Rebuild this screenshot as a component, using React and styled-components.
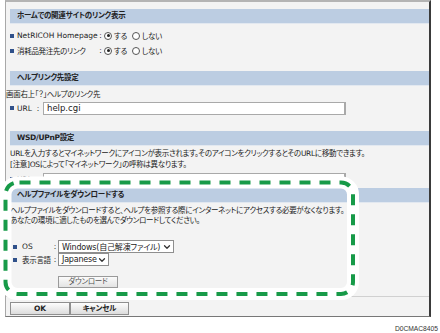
import React from "react";
import styled, { createGlobalStyle } from "styled-components";
import { ChevronDown } from "lucide-react";

const GlobalStyle = createGlobalStyle`
  html, body {
    margin: 0;
    padding: 0;
    background: #fff;
  }
  body {
    font-family: "DejaVu Sans", "Noto Sans CJK JP", sans-serif;
    font-size: 7.5px;
    color: #222;
    font-feature-settings: "palt";
  }
`;

const Page = styled.div`
  width: 440px;
  height: 333px;
  overflow: hidden;
`;

const Panel = styled.div`
  margin-left: 5px;
  width: 423px;
  background: #f3f3f3;
  border-top: 2px solid #b4b4b4;
  border-left: 1px solid #a8a8a8;
  border-right: 2px solid #3a3a3a;
  border-bottom: 1px solid #777;
  display: flex;
  flex-direction: column;
`;

const Header = styled.div`
  margin: ${(p) => p.$top || 0}px 0 0 4px;
  height: 14px;
  line-height: 14px;
  padding-left: 7px;
  background: #bccde2;
  border-bottom: 1px solid #e2e8f0;
  font-weight: bold;
  letter-spacing: -0.3px;
  white-space: nowrap;
`;

const Row = styled.div`
  display: flex;
  align-items: center;
  height: ${(p) => p.$h || 15}px;
  margin-top: ${(p) => p.$top || 0}px;
  padding-left: ${(p) => p.$indent || 4}px;
  white-space: nowrap;
`;

const Bullet = styled.span`
  width: 4px;
  height: 4px;
  background: #30518a;
  margin-right: ${(p) => p.$gap || 3}px;
  flex: none;
`;

const Label = styled.span`
  width: ${(p) => p.$w}px;
  letter-spacing: ${(p) => (p.$tight ? "-0.3px" : "0")};
  flex: none;
`;

const Colon = styled.span`
  width: ${(p) => p.$w || 6}px;
  text-align: center;
  flex: none;
`;

const Option = styled.span`
  letter-spacing: -0.3px;
`;

const Radio = styled.span`
  width: 6px;
  height: 6px;
  border: 1px solid #555;
  border-radius: 50%;
  background: #fff;
  margin: 0 2px 0 ${(p) => p.$left || 0}px;
  display: inline-flex;
  align-items: center;
  justify-content: center;
  flex: none;
  &::after {
    content: "";
    width: 3px;
    height: 3px;
    border-radius: 50%;
    background: ${(p) => (p.$on ? "#222" : "transparent")};
  }
`;

const Text = styled.div`
  margin-top: ${(p) => p.$top || 0}px;
  padding-left: ${(p) => p.$indent ?? 4}px;
  line-height: ${(p) => p.$lh || 10}px;
  letter-spacing: -0.3px;
  white-space: nowrap;
`;

const Input = styled.div`
  width: 297px;
  height: 11px;
  border: 1px solid #a9a9a9;
  border-right-width: 2px;
  background: #fff;
  padding-left: 3px;
  font-size: 8.5px;
  line-height: 11px;
`;

const Select = styled.div`
  width: ${(p) => p.$w}px;
  height: 13px;
  box-sizing: border-box;
  border: 1px solid #8e8e8e;
  background: #fff;
  display: flex;
  align-items: center;
  justify-content: space-between;
  padding: 0 1px 0 3px;
  font-size: 8px;
  letter-spacing: -0.2px;
  flex: none;
`;

const DownloadSection = styled.div`
  position: relative;
  display: flex;
  flex-direction: column;
  padding-bottom: 8px;
  margin-top: 2px;
`;

const Highlight = styled.svg`
  position: absolute;
  left: -6px;
  top: -10px;
  overflow: visible;
  pointer-events: none;
`;

const SmallButton = styled.div`
  width: 58px;
  height: 10px;
  margin: ${(p) => p.$top || 0}px 0 0 52px;
  border: 1px solid #9a9a9a;
  background: linear-gradient(#fbfbfb, #e3e3e3);
  color: #555;
  font-size: 7.5px;
  line-height: 10px;
  letter-spacing: -0.3px;
  text-align: center;
`;

const ButtonBar = styled.div`
  border-top: 1px solid #d0d0d0;
  padding: 5px 0 1px 4px;
  display: flex;
`;

const Button = styled.div`
  width: ${(p) => p.$w}px;
  height: 11px;
  border: 1px solid #8f8f8f;
  background: linear-gradient(#fdfdfd, #dcdcdc);
  font-weight: bold;
  font-size: 7.5px;
  line-height: 11px;
  letter-spacing: -0.2px;
  text-align: center;
`;

const Caption = styled.div`
  margin-top: 8px;
  padding-right: 2px;
  text-align: right;
  font-family: "Liberation Sans", Arial, sans-serif;
  font-size: 6.7px;
  color: #333;
  font-feature-settings: normal;
`;

const Chevron = () => <ChevronDown size={10} strokeWidth={3} color="#333" />;

export default function App() {
  return (
    <Page>
      <GlobalStyle />
      <Panel>
        <Header $top={7}>ホームでの関連サイトのリンク表示</Header>
        <Row $top={4}>
          <Bullet />
          <Label $w={81}>NetRICOH Homepage</Label>
          <Colon $w={5}>:</Colon>
          <Radio $on $left={1} />
          <Option>する</Option>
          <Radio $left={5} />
          <Option>しない</Option>
        </Row>
        <Row>
          <Bullet />
          <Label $w={81} $tight>
            消耗品発注先のリンク
          </Label>
          <Colon $w={5}>:</Colon>
          <Radio $on $left={1} />
          <Option>する</Option>
          <Radio $left={5} />
          <Option>しない</Option>
        </Row>

        <Header $top={13}>ヘルプリンク先設定</Header>
        <Text $top={3} $lh={12} $indent={0}>
          画面右上「？」ヘルプのリンク先
        </Text>
        <Row $h={14}>
          <Bullet />
          <Label $w={16}>URL</Label>
          <Colon $w={10}>:</Colon>
          <Input>help.cgi</Input>
        </Row>

        <Header $top={16}>WSD/UPnP設定</Header>
        <Text $top={3} $lh={10.5}>
          URLを入力するとマイネットワークにアイコンが表示されます。そのアイコンをクリックするとそのURLに移動できます。
          <br />
          [注意]OSによって「マイネットワーク」の呼称は異なります。
        </Text>
        <Row $h={14} $top={2}>
          <Bullet />
          <Label $w={16}>URL</Label>
          <Colon $w={10}>:</Colon>
          <Input />
        </Row>

        <DownloadSection>
          <Header>ヘルプファイルをダウンロードする</Header>
          <Text $top={3}>
            ヘルプファイルをダウンロードすると、ヘルプを参照する際にインターネットにアクセスする必要がなくなります。
            <br />
            あなたの環境に適したものを選んでダウンロードしてください。
          </Text>
          <Row $h={13} $top={14} $indent={7}>
            <Bullet $gap={5} />
            <Label $w={30}>OS</Label>
            <Colon $w={6}>:</Colon>
            <Select $w={116}>
              Windows(自己解凍ファイル)
              <Chevron />
            </Select>
          </Row>
          <Row $h={13} $indent={7}>
            <Bullet $gap={5} />
            <Label $w={30} $tight>
              表示言語
            </Label>
            <Colon $w={6}>:</Colon>
            <Select $w={51}>
              Japanese
              <Chevron />
            </Select>
          </Row>
          <SmallButton $top={10}>ダウンロード</SmallButton>

          <Highlight width="362" height="122" viewBox="0 0 362 122">
            <rect
              x="5.5"
              y="4.5"
              width="347.5"
              height="111.5"
              rx="12"
              fill="none"
              stroke="#fff"
              strokeWidth="12"
            />
            <rect
              x="5.5"
              y="4.5"
              width="347.5"
              height="111.5"
              rx="12"
              fill="none"
              stroke="#179a48"
              strokeWidth="4"
              strokeDasharray="11 9"
              strokeDashoffset="-2"
            />
          </Highlight>
        </DownloadSection>

        <ButtonBar>
          <Button $w={58}>OK</Button>
          <Button $w={57}>キャンセル</Button>
        </ButtonBar>
      </Panel>
      <Caption>D0CMAC8405</Caption>
    </Page>
  );
}
